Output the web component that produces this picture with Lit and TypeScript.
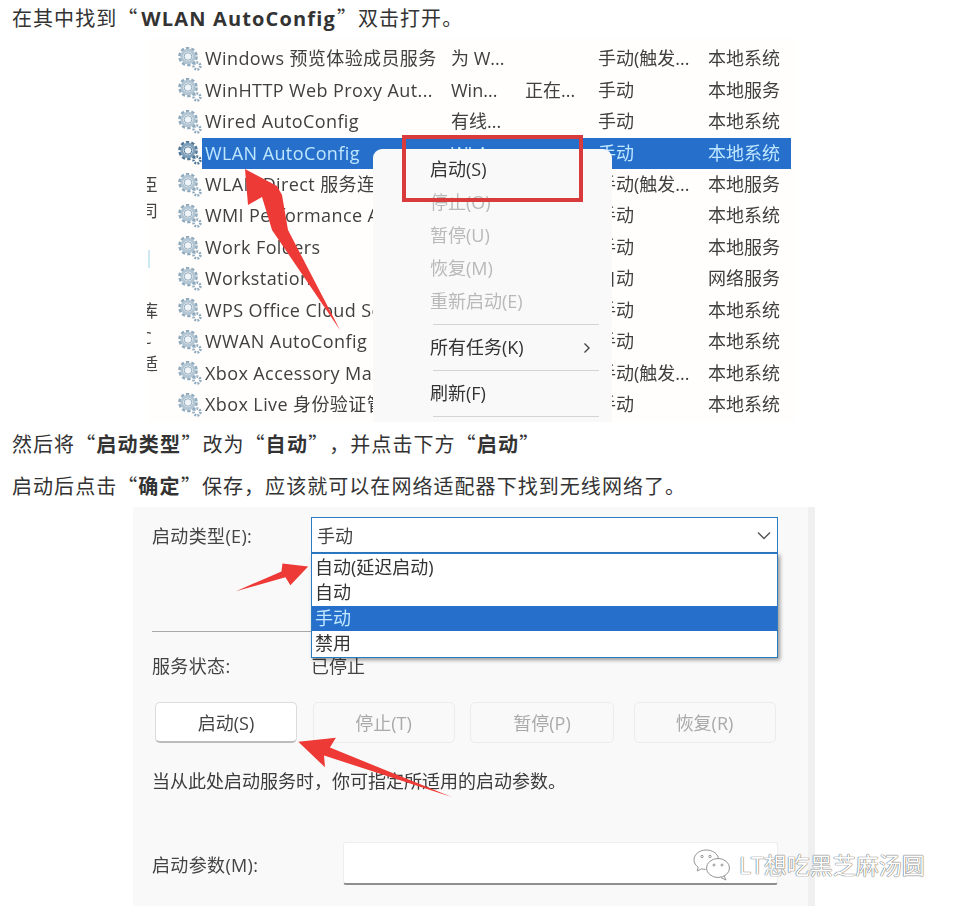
import { LitElement, html, css, svg } from "lit";
import { customElement } from "lit/decorators.js";

const SANS = css`"Open Sans", "Noto Sans CJK SC", sans-serif`;

const rows: [string, string, string, string, string][] = [
  ["Windows 预览体验成员服务", "为 W...", "", "手动(触发...", "本地系统"],
  ["WinHTTP Web Proxy Aut...", "Win...", "正在...", "手动", "本地服务"],
  ["Wired AutoConfig", "有线...", "", "手动", "本地系统"],
  ["WLAN AutoConfig", "WLA...", "", "手动", "本地系统"],
  ["WLAN Direct 服务连接管理器服务", "", "", "手动(触发...", "本地服务"],
  ["WMI Performance Adapter", "", "", "手动", "本地系统"],
  ["Work Folders", "", "", "手动", "本地服务"],
  ["Workstation", "", "", "自动", "网络服务"],
  ["WPS Office Cloud Service", "", "", "手动", "本地系统"],
  ["WWAN AutoConfig", "", "", "手动", "本地系统"],
  ["Xbox Accessory Management", "", "", "手动(触发...", "本地系统"],
  ["Xbox Live 身份验证管理器", "", "", "手动", "本地系统"],
];

const gear = (dark: boolean) => {
  const c = dark ? "#4f7696" : "#8fa9bd";
  const c2 = dark ? "#7fa0ba" : "#b3c6d4";
  return html`<svg class="gear" viewBox="0 0 24 24" width="24" height="24">
    <circle cx="10" cy="9.5" r="8.2" fill="none" stroke=${c} stroke-width="3.2" stroke-dasharray="3.2 2"></circle>
    <circle cx="10" cy="9.5" r="6.2" fill="none" stroke=${c2} stroke-width="3"></circle>
    <circle cx="10" cy="9.5" r="3.8" fill="#eef4f8" stroke=${c} stroke-width="1"></circle>
    <circle cx="19" cy="19" r="3.4" fill="none" stroke=${c} stroke-width="2.6" stroke-dasharray="1.8 1.2"></circle>
    <circle cx="19" cy="19" r="1.2" fill="#fff"></circle>
  </svg>`;
};

@customElement("app-root")
export class AppRoot extends LitElement {
  static styles = css`
    :host {
      display: block;
      position: relative;
      width: 954px;
      height: 906px;
      overflow: hidden;
      background: #fff;
      color: #333;
      font-family: ${SANS};
    }
    p {
      margin: 0;
      padding-left: 12px;
      height: 36px;
      font-family: "Noto Sans CJK SC", sans-serif;
      font-size: 20px;
      line-height: 36px;
      letter-spacing: 1.05px;
      white-space: nowrap;
      text-spacing-trim: space-all;
    }
    p b { font-weight: 700; letter-spacing: 1.3px; }
    p .en {
      font-family: "Open Sans", sans-serif;
      letter-spacing: 1.15px;
      margin-left: 3px;
      margin-right: 1px;
    }
    .p2 { margin-top: 4px; }
    .p3 { margin-top: 6px; }

    /* ---------- services shot ---------- */
    .shot1 {
      position: relative;
      margin: 2px 0 4px 147px;
      width: 648px;
      height: 384px;
      display: flex;
      overflow: hidden;
      background: #fffefd;
      filter: blur(0.45px);
    }
    .sliver {
      width: 11px;
      flex: none;
      position: relative;
      font-size: 17px;
      color: #444;
      overflow: hidden;
    }
    .sliver span { position: absolute; right: 0; line-height: 22px; width: 17px; }
    .sliver i {
      position: absolute; left: 1px; top: 212px; width: 2px; height: 18px; background: #cdeaf2;
    }
    .table {
      margin-left: 20px;
      width: 613px;
      padding-top: 5.2px;
      font-size: 18px;
      color: #404040;
    }
    .row {
      display: grid;
      grid-template-columns: 24px 245px 74px 73px 110px 87px;
      height: 31.45px;
      line-height: 31.45px;
      align-items: center;
    }
    .row > div { white-space: nowrap; overflow: hidden; padding-left: 4px; height: 31.45px; }
    .row > .name { padding-left: 3px; letter-spacing: 0.4px; }
    .row > .ic { padding-left: 0; display: flex; align-items: center; }
    .row.sel > div:not(.ic) { background: #2670cc; color: #bfe6ff; }
    .menu {
      position: absolute;
      left: 226px;
      top: 111px;
      width: 239px;
      height: 273px;
      overflow: hidden;
      background: #f9f9f9;
      border-radius: 9px 9px 0 0;
      padding-top: 3.5px;
      box-sizing: border-box;
      font-size: 18px;
      color: #333;
    }
    .mi { height: 33px; line-height: 33px; padding-left: 57px; position: relative; white-space: nowrap; }
    .mi.off { color: #b9b9b9; }
    .mi svg { position: absolute; left: 210px; top: 11px; }
    .sep { height: 13px; display: flex; align-items: center; padding-left: 60px; }
    .sep::after { content: ""; width: 166px; height: 1px; background: #d4d4d4; }
    .redbox {
      position: absolute;
      left: 255px;
      top: 97px;
      width: 181px;
      height: 67px;
      box-sizing: border-box;
      border: 4px solid #d93a3c;
    }
    .overlay { position: absolute; left: 0; top: 0; width: 100%; height: 100%; pointer-events: none; }

    /* ---------- dialog shot ---------- */
    .fig2 {
      position: relative;
      margin: 3px 0 0 133px;
      width: 682px;
      height: 399px;
    }
    .shot2 {
      position: relative;
      box-sizing: border-box;
      width: 682px;
      height: 399px;
      padding: 10px 30px 0 19px;
      background: #f9f9f9;
      border-right: 7px solid #f0f0f0;
      font-size: 18px;
      color: #444;
      filter: blur(0.45px);
      overflow: hidden;
    }
    .lbl { letter-spacing: 0.35px; }
    .r1 { display: flex; height: 36px; align-items: center; }
    .r1 .lbl { width: 159px; flex: none; }
    .select {
      flex: 1;
      height: 36px;
      box-sizing: border-box;
      border: 1.5px solid #2b7ac4;
      background: #fff;
      padding: 0 6px 0 5px;
      display: flex;
      align-items: center;
      justify-content: space-between;
    }
    .divider { margin-top: 78px; width: 220px; height: 1px; background: #a8a8a8; }
    .r2 { display: flex; margin-top: 23px; height: 22px; line-height: 22px; align-items: center; }
    .r2 .lbl { width: 159px; flex: none; }
    .btns {
      margin: 25px 0 0 3px;
      display: grid;
      grid-template-columns: 142px 142px 144px 142px;
      column-gap: 15.5px;
    }
    .btn {
      height: 41px;
      line-height: 40px;
      text-align: center;
      box-sizing: border-box;
      border: 1px solid #ececec;
      border-radius: 5px;
      background: #f9f9f9;
      color: #aaa;
    }
    .btn.on { background: #fff; color: #444; border-color: #dcdcdc; border-bottom: 2px solid #bcbcbc; }
    .btn:last-child { width: 142px; margin-left: 4px; }
    .hint { margin-top: 26px; line-height: 24px; white-space: nowrap; color: #3c3c3c; }
    .r3 { display: flex; margin-top: 49px; align-items: center; }
    .r3 .lbl { width: 191px; flex: none; }
    .input {
      width: 435px;
      flex: none;
      height: 43px;
      box-sizing: border-box;
      background: #fff;
      border: 1px solid #eee;
      border-bottom: 2px solid #8e8e8e;
      border-radius: 3px;
    }
    .drop {
      position: absolute;
      left: 178px;
      top: 46px;
      width: 467px;
      box-sizing: border-box;
      height: 105px;
      padding-top: 1px;
      background: #fff;
      border: 1.5px solid #2b7ac4;
      box-shadow: 2px 2px 4px rgba(0, 0, 0, 0.4);
      color: #333;
    }
    .drop div { height: 25.3px; line-height: 25.3px; padding-left: 3px; white-space: nowrap; }
    .drop .hi { background: #2670cc; color: #c2e8ff; }

    .mark {
      position: absolute;
      left: 560px;
      top: 342px;
      display: flex;
      align-items: center;
      gap: 8px;
      font-size: 23px;
      line-height: 30px;
      color: #fff;
      white-space: nowrap;
      text-shadow: 0 0 1px #555, 0 0 1px #555;
    }
  `;

  render() {
    return html`
      <p>在其中找到“<b class="en">WLAN AutoConfig</b>”双击打开。</p>
      <div class="shot1">
        <div class="sliver">
          <span style="top:136px">臣</span>
          <span style="top:162px">司</span>
          <i></i>
          <span style="top:262px">库</span>
          <span style="top:289px">C</span>
          <span style="top:315px">适</span>
        </div>
        <div class="table">
          ${rows.map(
            (r, i) => html`<div class="row ${i === 3 ? "sel" : ""}">
              <div class="ic">${gear(i === 3)}</div>
              <div class="name">${r[0]}</div>
              <div>${r[1]}</div>
              <div>${r[2]}</div>
              <div>${r[3]}</div>
              <div>${r[4]}</div>
            </div>`
          )}
        </div>
        <div class="menu">
          <div class="mi">启动(S)</div>
          <div class="mi off">停止(O)</div>
          <div class="mi off">暂停(U)</div>
          <div class="mi off">恢复(M)</div>
          <div class="mi off">重新启动(E)</div>
          <div class="sep"></div>
          <div class="mi">所有任务(K)
            <svg width="8" height="12" viewBox="0 0 8 12"><path d="M1.5 1.5 6 6l-4.5 4.5" fill="none" stroke="#444" stroke-width="1.4"></path></svg>
          </div>
          <div class="sep"></div>
          <div class="mi">刷新(F)</div>
          <div class="sep"></div>
        </div>
        <div class="redbox"></div>
        <svg class="overlay" viewBox="147 38 648 384">
          <polygon points="245,169 277,186 282,195 288,230 340,330 272,230 262,197 248,205" fill="#ee3a36"></polygon>
        </svg>
      </div>
      <p class="p2">然后将“<b>启动类型</b>”改为“<b>自动</b>”，并点击下方“<b>启动</b>”</p>
      <p class="p3">启动后点击“<b>确定</b>”保存，应该就可以在网络适配器下找到无线网络了。</p>
      <div class="fig2">
        <div class="shot2">
          <div class="r1">
            <div class="lbl">启动类型(E):</div>
            <div class="select">
              <span>手动</span>
              <svg width="14" height="9" viewBox="0 0 14 9"><path d="M1 1.5 7 7.5l6-6" fill="none" stroke="#555" stroke-width="1.4"></path></svg>
            </div>
          </div>
          <div class="divider"></div>
          <div class="r2"><div class="lbl">服务状态:</div><div>已停止</div></div>
          <div class="btns">
            <div class="btn on">启动(S)</div>
            <div class="btn">停止(T)</div>
            <div class="btn">暂停(P)</div>
            <div class="btn">恢复(R)</div>
          </div>
          <div class="hint">当从此处启动服务时，你可指定所适用的启动参数。</div>
          <div class="r3"><div class="lbl">启动参数(M):</div><div class="input"></div></div>
          <div class="drop">
            <div>自动(延迟启动)</div>
            <div>自动</div>
            <div class="hi">手动</div>
            <div>禁用</div>
          </div>
          <svg class="overlay" viewBox="133 507 682 399">
            <polygon points="310,565 292,584 287,576 237,590 283,570 284,562" fill="#ee3a36"></polygon>
            <polygon points="300,742 338,738 332,748 455,798 326,756 327,768" fill="#ee3a36"></polygon>
          </svg>
        </div>
        <div class="mark">
          <svg width="38" height="32" viewBox="0 0 38 32" fill="none" stroke="#888" stroke-width="0.9">
            ${svg`<path d="M13 1C6.5 1 1 5.3 1 10.8c0 3 1.7 5.6 4.2 7.4L4.2 22l4.4-2.2c1.2.4 2.6.6 4 .6"></path>
            <path d="M25.5 9.5c-.9-5-6-8.5-12.5-8.5"></path>
            <ellipse cx="25" cy="19" rx="11.5" ry="9.5"></ellipse>
            <path d="M31 27l2 4-5-2.4"></path>
            <circle cx="9" cy="7.5" r="1.2"></circle><circle cx="17" cy="7.5" r="1.2"></circle>
            <circle cx="21" cy="16" r="1"></circle><circle cx="29" cy="16" r="1"></circle>`}
          </svg>
          <span>LT想吃黑芝麻汤圆</span>
        </div>
      </div>
    `;
  }
}
